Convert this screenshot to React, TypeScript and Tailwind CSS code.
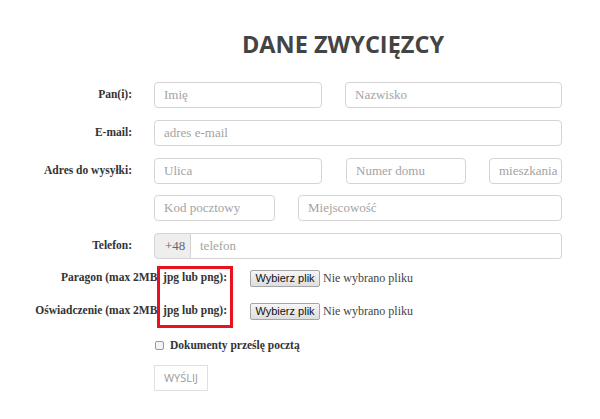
const serif = "font-['Liberation_Serif',serif]";

const inputCls =
  "h-[26px] rounded-[4px] border border-[#d4d4d4] bg-white px-[9px] text-[13px] text-[#555] placeholder:text-[#a3a3a3] outline-none font-['Liberation_Serif',serif]";

function Row({ label, children }: { label: string; children: React.ReactNode }) {
  return (
    <div className="flex items-center">
      <label className={`w-[132px] shrink-0 text-right text-[11.5px] font-bold text-[#333] ${serif}`}>
        {label}
      </label>
      <div className="ml-[22px] flex w-[408px] items-center">{children}</div>
    </div>
  );
}

function FileRow({ label }: { label: string }) {
  return (
    <div className="flex items-center">
      <label className={`w-[227px] shrink-0 text-right text-[11.5px] font-bold text-[#333] ${serif}`}>
        {label}
      </label>
      <div className="ml-[23px] flex items-center">
        <button
          type="button"
          className="h-[17px] w-[70px] rounded-[2px] border border-[#a6a6a6] bg-gradient-to-b from-[#f6f6f6] to-[#dedede] text-[11px] leading-none text-[#111] font-['Liberation_Sans',sans-serif]"
        >
          Wybierz plik
        </button>
        <span className={`ml-[3px] text-[12px] text-[#444] ${serif}`}>Nie wybrano pliku</span>
      </div>
    </div>
  );
}

export default function App() {
  return (
    <div className="relative h-[419px] w-[600px] bg-white">
      <h1 className="ml-[124px] w-[438px] pt-[29px] text-center text-[23.5px] font-bold leading-[30px] text-[#444] font-['Open_Sans',sans-serif]">
        DANE ZWYCIĘZCY
      </h1>

      <div className="mt-[23px] flex flex-col gap-[12px]">
        <Row label="Pan(i):">
          <input className={`${inputCls} w-[168px]`} placeholder="Imię" />
          <input className={`${inputCls} ml-[23px] w-[217px]`} placeholder="Nazwisko" />
        </Row>
        <Row label="E-mail:">
          <input className={`${inputCls} w-[408px]`} placeholder="adres e-mail" />
        </Row>
        <div className="flex flex-col gap-[11px]">
          <Row label="Adres do wysyłki:">
            <input className={`${inputCls} w-[168px]`} placeholder="Ulica" />
            <input className={`${inputCls} ml-[24px] w-[120px]`} placeholder="Numer domu" />
            <input className={`${inputCls} ml-[23px] w-[73px] pr-0 text-[12.5px]`} placeholder="mieszkania" />
          </Row>
          <Row label="">
            <input className={`${inputCls} w-[121px]`} placeholder="Kod pocztowy" />
            <input className={`${inputCls} ml-[23px] w-[264px]`} placeholder="Miejscowość" />
          </Row>
        </div>
        <Row label="Telefon:">
          <div className="flex h-[26px] w-[408px]">
            <span className={`flex w-[37px] items-center rounded-l-[4px] border border-[#d4d4d4] bg-[#eee] pl-[10px] text-[13px] text-[#666] ${serif}`}>
              +48
            </span>
            <input className={`${inputCls} flex-1 rounded-l-none border-l-0`} placeholder="telefon" />
          </div>
        </Row>
      </div>

      <div className="mt-[10px] flex flex-col gap-[15px]">
        <FileRow label="Paragon (max 2MB, jpg lub png):" />
        <FileRow label="Oświadczenie (max 2MB, jpg lub png):" />
      </div>

      <div className="ml-[155px] mt-[17px] flex items-center">
        <span className="h-[9px] w-[9px] rounded-[2px] border border-[#999] bg-[#f3f3f3]" />
        <span className={`ml-[6px] text-[11.5px] font-bold text-[#333] ${serif}`}>Dokumenty prześlę pocztą</span>
      </div>

      <button
        type="button"
        className="ml-[154px] mt-[11px] h-[26px] w-[54px] border border-[#e0e0e0] bg-white text-[11px] uppercase text-[#9a9a9a] font-['Open_Sans',sans-serif]"
      >
        Wyślij
      </button>

      <div className="absolute left-[157px] top-[266px] h-[62px] w-[76px] border-[3px] border-[#e8111d]" />
    </div>
  );
}
